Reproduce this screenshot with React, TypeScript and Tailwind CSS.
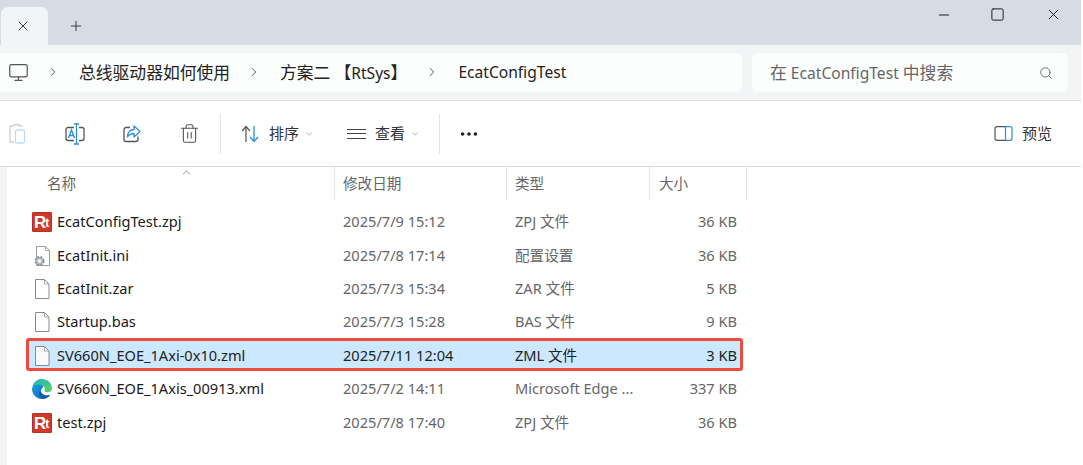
import React from 'react';
import { ChevronDown, ChevronRight, ChevronUp, Minus, Monitor, MoreHorizontal, Plus, Search, Square, Trash2, X } from 'lucide-react';

const FONT = "font-['Noto_Sans','Noto_Sans_CJK_SC',sans-serif]";

const RtIcon = () => (
  <div className="flex h-[20px] w-[20px] items-end justify-start overflow-hidden rounded-[1px] border border-[#b5301f] bg-[#cf3a28] pl-[1px] font-['Liberation_Sans',sans-serif] font-bold text-white">
    <span className="text-[17px] leading-[17px]">R</span>
    <span className="ml-[-1px] text-[12px] leading-[15px]">t</span>
  </div>
);

const FileIcon = ({ selected }: { selected?: boolean }) => (
  <svg width="20" height="24" viewBox="0 0 20 24" fill="none">
    <path d="M3.5 2.5h9l4.5 4.5v14.500h-13.500z" fill={selected ? '#f7f9fb' : '#ffffff'} stroke="#8a8a8a" strokeWidth="1" strokeLinejoin="round" />
    <path d="M12.500 2.500v4.500h4.500" fill="none" stroke="#a8a8a8" strokeWidth="1" />
  </svg>
);

const IniIcon = () => (
  <svg width="20" height="24" viewBox="0 0 20 24" fill="none">
    <path d="M4.500 2.500h9l4 4v15h-13z" fill="#fff" stroke="#9a9a9a" />
    <path d="M13.500 2.500v4h4" stroke="#b0b0b0" />
    <circle cx="7.500" cy="17" r="4" fill="#bfc3c6" stroke="#8d9296" strokeWidth="2" strokeDasharray="2 1.200" />
    <circle cx="7.500" cy="17" r="1.500" fill="#fff" />
  </svg>
);

const EdgeIcon = () => (
  <svg width="20" height="20" viewBox="0 0 20 20">
    <defs>
      <linearGradient id="edgeBlue" x1="0" y1="0" x2="1" y2="1">
        <stop offset="0" stopColor="#1ba6e6" />
        <stop offset="1" stopColor="#0a62b5" />
      </linearGradient>
      <linearGradient id="edgeGreen" x1="0" y1="0" x2="1" y2="1">
        <stop offset="0" stopColor="#1fb5c8" />
        <stop offset="1" stopColor="#5fd35f" />
      </linearGradient>
    </defs>
    <path d="M10 0A10 10 0 0 0 0 10c0 5.500 4.500 10 10 10 3.500 0 6.500-1.600 8.300-4.200-1 .5-2.200.7-3.300.7-3.500 0-6-2.300-6-4.500 0-1.500.8-2.600 2-3.500z" fill="url(#edgeBlue)" />
    <path d="M1.500 6C3 2.400 6.300 0 10 0c5.500 0 10 4 10 9.500 0 2.500-2 3.700-4.300 3.700-1.700 0-3-.6-3.500-1.300 1-1.200.9-3-.4-4.300C10 6 8 5.200 6 5.500 4 5.800 2.700 6.700 1.500 8z" fill="url(#edgeGreen)" />
    <path d="M8.500 11.500c0 2.800 3 5 6.500 5 1.200 0 2.300-.2 3.300-.7-1.600 2.300-4 3.700-6.800 4.100-2.700-.6-4.500-2.900-4.500-5.400 0-1.300.5-2.400 1.500-3z" fill="#0a5aa8" />
  </svg>
);

const files = [
  { name: 'EcatConfigTest.zpj', date: '2025/7/9 15:12', type: 'ZPJ 文件', size: '36 KB', icon: 'rt' },
  { name: 'EcatInit.ini', date: '2025/7/8 17:14', type: '配置设置', size: '36 KB', icon: 'ini' },
  { name: 'EcatInit.zar', date: '2025/7/3 15:34', type: 'ZAR 文件', size: '5 KB', icon: 'file' },
  { name: 'Startup.bas', date: '2025/7/3 15:28', type: 'BAS 文件', size: '9 KB', icon: 'file' },
  { name: 'SV660N_EOE_1Axi-0x10.zml', date: '2025/7/11 12:04', type: 'ZML 文件', size: '3 KB', icon: 'file', selected: true },
  { name: 'SV660N_EOE_1Axis_00913.xml', date: '2025/7/2 14:11', type: 'Microsoft Edge ...', size: '337 KB', icon: 'edge' },
  { name: 'test.zpj', date: '2025/7/8 17:40', type: 'ZPJ 文件', size: '36 KB', icon: 'rt' },
];

const fileIcon = (icon: string, selected?: boolean) => {
  if (icon === 'rt') return <RtIcon />;
  if (icon === 'ini') return <IniIcon />;
  if (icon === 'edge') return <EdgeIcon />;
  return <FileIcon selected={selected} />;
};

const Crumb = ({ children, className }: { children: React.ReactNode; className: string }) => (
  <div className={`flex items-center ${className}`}>
    <ChevronRight size={14} strokeWidth={1.5} className="mr-[19px] shrink-0 text-[#444]" />
    <span className="whitespace-nowrap">{children}</span>
  </div>
);

export default function App() {
  return (
    <div className="h-[465px] w-[1083px] overflow-hidden bg-white pr-[2px]">
      <div className={`flex h-full flex-col ${FONT} text-[14.600px] text-[#1a1a1a]`}>
        {/* title bar */}
        <div className="flex h-[45px] shrink-0 items-end bg-[#d7dbe3] pl-px">
          <div className="flex h-[38px] w-[47px] items-center justify-center rounded-t-[7px] bg-[#f3f4f6] pb-[1px] pr-[4px]">
            <X size={16} strokeWidth={1.4} className="text-[#333]" />
          </div>
          <div className="flex h-[38px] w-[56px] items-center justify-center">
            <Plus size={16} strokeWidth={1.4} className="text-[#333]" />
          </div>
          <div className="ml-auto flex h-full items-start pt-[6px] pr-[19px] text-[#222]">
            <Minus size={16} strokeWidth={1.5} className="mr-[38px] mt-[1px]" />
            <Square size={15} strokeWidth={1.6} className="mr-[40px] mt-[1px]" />
            <X size={17} strokeWidth={1.4} />
          </div>
        </div>

        {/* address row */}
        <div className="flex h-[56px] shrink-0 items-start gap-[10px] border-b border-[#dcdee2] bg-[#f3f4f6] pt-[8px] pr-[13px]">
          <div className="flex h-[39px] w-[742px] items-center rounded-r-[6px] bg-[#fcfdfd] pl-[8px] text-[15.600px] text-[#222]">
            <Monitor size={21} strokeWidth={1.4} className="mr-[17px] shrink-0 text-[#555]" />
            <Crumb className="mr-[17px]"><span className="text-[16.800px]">总线驱动器如何使用</span></Crumb>
            <Crumb className="mr-[18px]"><span className="text-[16.800px]">方案二</span> <span className="text-[16.800px]">【</span>RtSys<span className="text-[16.800px]">】</span></Crumb>
            <Crumb className="">EcatConfigTest</Crumb>
          </div>
          <div className="flex h-[39px] w-[316px] items-center justify-between rounded-[6px] bg-[#fcfdfd] pl-[18px] pr-[15px] text-[15.600px] text-[#666]">
            <span><span className="text-[16.800px]">在</span> EcatConfigTest <span className="text-[16.800px]">中搜索</span></span>
            <Search size={14} strokeWidth={1.6} className="text-[#666]" />
          </div>
        </div>

        {/* command bar */}
        <div className="flex h-[66px] shrink-0 items-center border-b border-[#d5d8dd] bg-white pl-[8px] pr-[29px] text-[15px] text-[#333]">
          <svg width="20" height="22" viewBox="0 0 20 22" fill="none" className="mr-[36px]">
            <path d="M14 4V3h-3V1.500H6V3H2v16h4" stroke="#d0d0d0" strokeWidth="1.300" />
            <rect x="7.500" y="7" width="9" height="13" rx="1.500" stroke="#b9dcf6" strokeWidth="1.300" />
          </svg>
          <svg width="22" height="22" viewBox="0 0 22 22" fill="none" className="mr-[36px]">
            <path d="M10 4.500H4a2 2 0 0 0-2 2v9a2 2 0 0 0 2 2h6M15 4.500h3a2 2 0 0 1 2 2v9a2 2 0 0 1-2 2h-3" stroke="#555" strokeWidth="1.300" />
            <path d="M10 1h5M10 21h5M12.500 1v20" stroke="#2e8fe0" strokeWidth="1.300" />
            <path d="M4.500 15 7.500 7l3 8M5.500 12.500h4" stroke="#2e8fe0" strokeWidth="1.400" />
          </svg>
          <svg width="20" height="20" viewBox="0 0 20 20" fill="none" className="mr-[37px]">
            <path d="M8 3.500H4a2 2 0 0 0-2 2v10a2 2 0 0 0 2 2h10a2 2 0 0 0 2-2v-3" stroke="#555" strokeWidth="1.300" />
            <path d="M12 2v3.500C8 5.500 5.500 8 5.500 13c1.500-2.500 3.500-3.500 6.500-3.500V13l6-5.500z" stroke="#2e8fe0" strokeWidth="1.300" strokeLinejoin="round" />
          </svg>
          <Trash2 size={21} strokeWidth={1.25} className="mr-[20px] text-[#555]" />
          <div className="mr-[20px] h-[40px] w-px bg-[#e5e5e5]" />
          <svg width="20" height="18" viewBox="0 0 20 18" fill="none" className="mr-[8px]">
            <path d="M5 17V2M1 6l4-4.500L9 6" stroke="#555" strokeWidth="1.200" />
            <path d="M13 1v15.500M9 12l4 4.500 4-4.500" stroke="#2e8fe0" strokeWidth="1.300" />
          </svg>
          <span>排序</span>
          <ChevronDown size={10} strokeWidth={1.5} className="ml-[5px] mr-[33px] text-[#888]" />
          <div className="mr-[9px] flex w-[19px] flex-col gap-[3.500px]">
            <div className="h-px bg-[#444]" />
            <div className="h-px bg-[#444]" />
            <div className="h-px bg-[#444]" />
          </div>
          <span>查看</span>
          <ChevronDown size={10} strokeWidth={1.5} className="ml-[5px] mr-[19px] text-[#888]" />
          <div className="mr-[18px] h-[40px] w-px bg-[#e5e5e5]" />
          <MoreHorizontal size={22} strokeWidth={2} className="text-[#222]" />
          <div className="ml-auto flex items-center">
            <svg width="19" height="15" viewBox="0 0 19 15" fill="none" className="mr-[9px]">
              <path d="M11.500 .7H3a2 2 0 0 0-2 2v9.600a2 2 0 0 0 2 2h8.500" stroke="#555" strokeWidth="1.200" />
              <path d="M11.500 .7H16a2 2 0 0 1 2 2v9.600a2 2 0 0 1-2 2h-4.500z" stroke="#2e8fe0" strokeWidth="1.200" />
            </svg>
            <span>预览</span>
          </div>
        </div>

        {/* file list */}
        <div className="flex min-h-0 flex-1 bg-white">
          <div className="w-[7px] shrink-0 bg-[#f3f4f6]" />
          <div className="relative min-w-0 flex-1">
            <ChevronUp size={13} strokeWidth={1.5} className="absolute left-[173px] top-[-1px] text-[#777]" />
            <div className="flex h-[33px] items-center text-[#666]">
              <div className="h-full w-[328px] border-r border-[#e5e5e5] pl-[40px] leading-[32px]">名称</div>
              <div className="h-full w-[172px] border-r border-[#e5e5e5] pl-[8px] leading-[32px]">修改日期</div>
              <div className="h-full w-[143px] border-r border-[#e5e5e5] pl-[8px] leading-[32px]">类型</div>
              <div className="h-full w-[97px] border-r border-[#e5e5e5] pl-[9px] leading-[32px]">大小</div>
            </div>
            <div className="pt-[5.500px]">
              {files.map((file) => (
                <div key={file.name} className={`ml-[20px] flex w-[715px] items-center ${file.selected ? 'mt-[0.400px] mb-[2.500px] h-[30.500px] rounded-[2px] bg-[#cce8ff] pt-[2px] text-[#222] outline-[3px] -outline-offset-[2px] outline-[#ee4b3e]' : 'h-[33.400px]'}`}>
                  <div className="flex w-[316px] items-center">
                    <div className="ml-[5px] flex w-[25px] shrink-0 items-center">{fileIcon(file.icon, file.selected)}</div>
                    <span className="whitespace-nowrap">{file.name}</span>
                  </div>
                  <div className={`w-[172px] ${file.selected ? '' : 'text-[#666]'}`}>{file.date}</div>
                  <div className={`w-[170px] whitespace-nowrap ${file.selected ? '' : 'text-[#666]'}`}>{file.type}</div>
                  <div className={`w-[52px] text-right whitespace-nowrap ${file.selected ? '' : 'text-[#666]'}`}>{file.size}</div>
                </div>
              ))}
            </div>
          </div>
        </div>
      </div>
    </div>
  );
}
